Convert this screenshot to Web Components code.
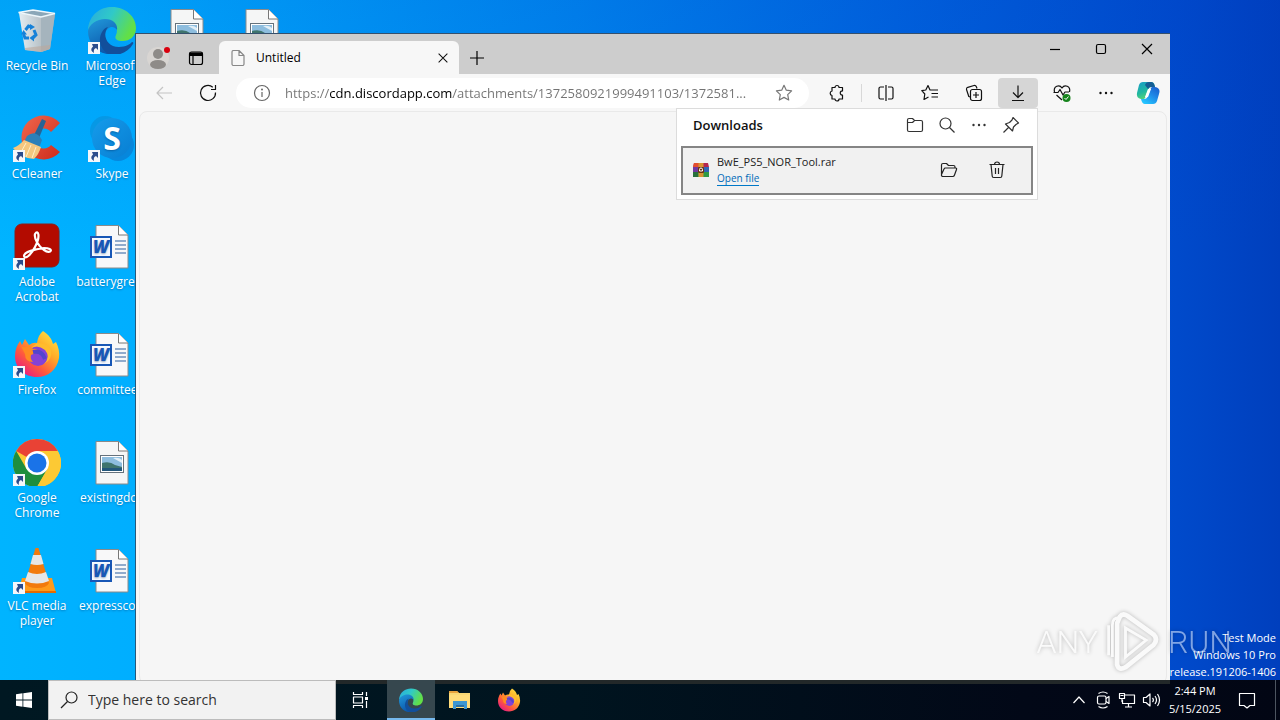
<!DOCTYPE html>
<html lang="en">
<head>
<meta charset="utf-8">
<title>Desktop</title>
<style>
    html, body {
        margin: 0;
        height: 100%;
        overflow: hidden;
    }

    body {
        font-family: "Open Sans", "Noto Sans", sans-serif;
        font-size: 12px;
        color: #111;
    }

    desk-column {
        width: 74px;
    }
</style>
</head>
<body>
<desktop-shell>
    <desk-column>
        <desk-icon icon="recycle">Recycle Bin</desk-icon>
        <desk-icon icon="ccleaner" shortcut>CCleaner</desk-icon>
        <desk-icon icon="acrobat" shortcut>Adobe<br>Acrobat</desk-icon>
        <desk-icon icon="firefox" shortcut>Firefox</desk-icon>
        <desk-icon icon="chrome" shortcut>Google<br>Chrome</desk-icon>
        <desk-icon icon="vlc" shortcut>VLC media<br>player</desk-icon>
    </desk-column>
    <desk-column>
        <desk-icon icon="edge" shortcut>Microsoft<br>Edge</desk-icon>
        <desk-icon icon="skype" shortcut>Skype</desk-icon>
        <desk-icon icon="word">batterygree..</desk-icon>
        <desk-icon icon="word">committee...</desk-icon>
        <desk-icon icon="image">existingdo..</desk-icon>
        <desk-icon icon="word">expressco...</desk-icon>
    </desk-column>
    <desk-column><desk-icon icon="image"></desk-icon></desk-column>
    <desk-column><desk-icon icon="image"></desk-icon></desk-column>

    <build-label slot="overlay">
        <span>Test Mode</span>
        <span>Windows 10 Pro</span>
        <span>release.191206-1406</span>
    </build-label>

    <browser-window slot="overlay">
        <tab-strip slot="tabs"><browser-tab>Untitled</browser-tab></tab-strip>
        <browser-toolbar slot="toolbar"></browser-toolbar>
        <downloads-panel slot="popup">
            <download-item name="BwE_PS5_NOR_Tool.rar">Open file</download-item>
        </downloads-panel>
    </browser-window>

    <task-bar slot="taskbar" time="2:44 PM" date="5/15/2025"></task-bar>
    <brand-mark slot="overlay"></brand-mark>
</desktop-shell>

<script>
const pageIcon = fill => `<path d="M8 3.500H30.500L40 13V46H8Z" fill="${fill}" stroke="#8a8a8a"/><path d="M30.500 3.500V13H40" fill="#fff" stroke="#777"/>`;

// [viewBox, markup]
const ICONS = {
    back: ['0 0 20 20', '<path d="M18 10H3M9 4L3 10L9 16" class="s"/>'],
    refresh: ['0 0 20 20', '<path d="M17.500 9.500A7.500 7.500 0 1 1 14.800 4.200M17.500 2V6.500H13" class="s"/>'],
    info: ['0 0 20 20', '<circle cx="10" cy="10" r="7.500" class="s"/><path d="M10 9V14" class="s"/><circle cx="10" cy="6.500" r="1" fill="currentColor"/>'],
    star: ['0 0 20 20', '<path d="M10 2.300L12.300 7.200L17.600 7.900L13.700 11.600L14.700 17L10 14.400L5.300 17L6.300 11.600L2.400 7.900L7.700 7.200Z" class="s"/>'],
    puzzle: ['0 0 20 20', '<path d="M5 4.500H8A2 2 0 0 1 12 4.500H15.500V8C12.500 7.500 12.500 12.500 15.500 12V16H12A2 2 0 0 1 8 16H5V12.500A2.300 2.300 0 0 1 5 8Z" class="s"/>'],
    split: ['0 0 20 20', '<path d="M8 4H4.500A1.500 1.500 0 0 0 3 5.500V14.500A1.500 1.500 0 0 0 4.500 16H8M12 4H15.500A1.500 1.500 0 0 1 17 5.500V14.500A1.500 1.500 0 0 1 15.500 16H12M10 2V18" class="s"/>'],
    favorites: ['0 0 20 20', '<path d="M11.500 7L10 7L8 2.500L5.800 7L1.800 7.700L4.800 11L4 16.500L8.500 14M11.500 7H18M11.500 10.500H18M11.500 14H18" class="s"/>'],
    collections: ['0 0 20 20', '<path d="M6 14L4.800 13.500L2.500 6.500A2 2 0 0 1 3.800 4.300L10 2.500A2 2 0 0 1 12.500 4L13 5.500" class="s"/><rect x="6.500" y="6.500" width="11" height="11" rx="2" class="s"/><path d="M12 9V15M9 12H15" class="s"/>'],
    download: ['0 0 20 20', '<path d="M10 2.500V14M5 9.500L10 14.500L15 9.500M4 17.500H16" class="s"/>'],
    heart: ['0 0 20 20', '<path d="M2.500 9C1 3 7.500 1 10 5C12.500 1 19 3 17.500 9M1.500 9.500H6L8 6.500L11 12L13 9H17M4.500 12L10 17" class="s"/><circle cx="14.500" cy="15" r="4" fill="#16841c"/><path d="M12.500 15L14 16.500L16.500 13.500" fill="none" stroke="#fff"/>'],
    more: ['0 0 20 20', '<g fill="currentColor"><circle cx="4.500" cy="10" r="1.200"/><circle cx="10" cy="10" r="1.200"/><circle cx="15.500" cy="10" r="1.200"/></g>'],
    copilot: ['0 0 24 24', `<defs><linearGradient id="a" x1="0" y1="0" x2=".4" y2="1"><stop stop-color="#199cc8"/><stop offset=".6" stop-color="#20b8a0"/><stop offset="1" stop-color="#58d475"/></linearGradient><linearGradient id="b" x1="1" y1="0" x2=".3" y2="1"><stop stop-color="#1858c9"/><stop offset=".5" stop-color="#2088e6"/><stop offset="1" stop-color="#24c4ff"/></linearGradient></defs>
        <path d="M7 1H15Q18 1 18.500 4L19 6H15Q13 6 12 9L9 17Q8 19 5 18Q0 17 1 12L3 4Q4 1 7 1Z" fill="url(#a)"/><path d="M13 1H15Q18 1 19 6H15Q13 6 12 8L9 4Q10 1 13 1Z" fill="#155d93"/><path d="M17 23H9Q6 23 5 18H9Q11 18 12 15L15 7Q16 5 19 6Q25 7 23 13L21 20Q20 23 17 23Z" fill="url(#b)"/><path d="M12 8H15L12 16H9Z" fill="#fff"/>`],
    profile: ['0 0 24 24', '<circle cx="12" cy="12" r="11" fill="#d8d5d2"/><circle cx="12" cy="8" r="5" fill="#8e8b88"/><ellipse cx="12" cy="18.500" rx="8" ry="4.500" fill="#8e8b88"/><circle cx="21" cy="4" r="3" fill="#d9000d"/>'],
    workspace: ['0 0 16 16', '<rect x="1.500" y="2" width="13" height="12.500" rx="2" fill="none" stroke="currentColor" stroke-width="1.200"/><path d="M1.500 2.500H14.500V6H1.500Z" fill="currentColor"/><path d="M5 6V14" class="s"/>'],
    file: ['0 0 16 16', '<path d="M3.500 .5H9L14 5.500V14A1.500 1.500 0 0 1 12.500 15.500H3.500A1.500 1.500 0 0 1 2 14V2A1.500 1.500 0 0 1 3.500 .5ZM9 .5V5.500H14" class="s"/>'],
    close: ['0 0 16 16', '<path d="M3 3L13 13M13 3L3 13" class="s"/>'],
    plus: ['0 0 16 16', '<path d="M8 1V15M1 8H15" class="s"/>'],
    minimize: ['0 0 16 16', '<path d="M3 8.500H13" class="s"/>'],
    maximize: ['0 0 16 16', '<rect x="3.500" y="3.500" width="9" height="9" rx="1.500" class="s"/>'],
    folder: ['0 0 20 20', '<path d="M2.500 5A1.500 1.500 0 0 1 4 3.500H7.500L9.500 5.500H16A1.500 1.500 0 0 1 17.500 7V15A1.500 1.500 0 0 1 16 16.500H4A1.500 1.500 0 0 1 2.500 15ZM2.500 7.500H7.500L9.500 5.500" class="s"/>'],
    search: ['0 0 20 20', '<circle cx="8.500" cy="8.500" r="5.500" class="s"/><path d="M12.500 12.500L17.500 17.500" class="s"/>'],
    pin: ['0 0 20 20', '<path d="M12 2.500L17.500 8L15 9.500L12.500 12L11.500 16L4.500 9L8.500 7.500L11 5ZM7.500 12.500L2.500 17.500" class="s"/>'],
    openfolder: ['0 0 20 20', '<path d="M2.500 14V5A1.500 1.500 0 0 1 4 3.500H7.500L9.500 5.500H14.500A1.500 1.500 0 0 1 16 7V8M2.500 14.500L5 9A1.500 1.500 0 0 1 6.500 8H16.500A1 1 0 0 1 17.500 9.500L15.500 15A2 2 0 0 1 14 16.500H4A1.500 1.500 0 0 1 2.500 14.500Z" class="s"/>'],
    trash: ['0 0 20 20', '<path d="M2.500 4.500H17.500M7.500 4.500A2.500 2.500 0 0 1 12.500 4.500M4 4.500L5.200 16A1.500 1.500 0 0 0 6.700 17.500H13.300A1.500 1.500 0 0 0 14.800 16L16 4.500M8.500 8V14M11.500 8V14" class="s"/>'],
    rar: ['0 0 16 16', '<path d="M1 1H15L16 5H0Z" fill="#b3264f"/><path d="M1 1H6V5H0Z" fill="#e34f2f"/><rect y="5" width="16" height="5" fill="#2f65b4"/><rect y="5" width="5" height="5" fill="#7137a0"/><rect y="10" width="16" height="5" fill="#2f9b45"/><rect y="10" width="5" height="5" fill="#28703c"/><rect x="5.500" y="1" width="5" height="14" fill="#d99432"/><rect x="5" y="5" width="6" height="6" rx="1" fill="#6b3413"/><path d="M6.500 9V7.500A1.500 1.500 0 0 1 9.500 7.500V9Z" fill="none" stroke="#fff"/>'],
    start: ['0 0 16 16', '<path d="M0 2.200L6.500 1.300V7.600H0ZM7.300 1.200L16 0V7.600H7.300ZM0 8.400H6.500V14.700L0 13.800ZM7.300 8.400H16V16L7.300 14.800Z" fill="#fff"/>'],
    find: ['0 0 20 20', '<circle cx="12.500" cy="7.500" r="5.500" class="s"/><path d="M8.500 11.500L2 18" class="s"/>'],
    taskview: ['0 0 20 20', '<path d="M3.500 2V4.500H12.500V2M3.500 18V15.500H12.500V18M3.500 7H12.500V13H3.500ZM16.500 2V6M16.500 11V18" class="s"/><rect x="15" y="7" width="3" height="3" fill="currentColor"/>'],
    explorer: ['0 0 24 24', '<path d="M1 3H9L11 5H22V20H1Z" fill="#f8d775"/><path d="M1 3H9L11 5H1Z" fill="#e8a33d"/><path d="M1 7H22V20H1Z" fill="#ffdc7a"/><path d="M5 13H19V21H16V17H8V21H5Z" fill="#3b96d2"/><path d="M8 17H16V19H8Z" fill="#2a6fa3"/>'],
    chevron: ['0 0 16 16', '<path d="M2.500 11L8 5L13.500 11" class="s"/>'],
    camera: ['0 0 20 20', '<path d="M5.500 3.500Q10 .5 14.500 3.500M5.500 16.500Q10 19.500 14.500 16.500M13 8.500L16 6.500V13.500L13 11.500" class="s"/><rect x="4.500" y="6" width="8.500" height="8" rx="1.500" class="s"/>'],
    network: ['0 0 20 20', '<path d="M8 5H17.500V13.500H5.500V10M11.500 13.500V17M8 17H15M2.500 3.500H7.500V8.500H2.500ZM3.500 5.500H6.500M5 8.500V12" class="s"/>'],
    sound: ['0 0 20 20', '<path d="M2.500 7.500H5L9 4V16L5 12.500H2.500ZM11.500 8A3 3 0 0 1 11.500 12M14 6Q17 10 14 14M16.500 4Q20.500 10 16.500 16" class="s"/>'],
    notice: ['0 0 20 20', '<path d="M2.500 3.500H17.500V15.500H13L10 18L7 15.500H2.500Z" class="s"/>'],

    recycle: ['0 0 48 48', `<defs><linearGradient id="a"><stop stop-color="#e4edf2"/><stop offset=".6" stop-color="#b9c3c9"/><stop offset="1" stop-color="#8fa5b3"/></linearGradient></defs>
        <path d="M6 7L12 44L28 46L37 43L42 8L30 11Z" fill="url(#a)"/><path d="M28 11L42 8L37 43L28 46Z" fill="#a5b4bd"/><path d="M5.500 6.500L20 4L42 7.500L28 11Z" fill="#8ba7b8" stroke="#eef6fa" stroke-width="1.300"/><path d="M12 42L37 39V43L28 46L12 44Z" fill="#bba99c" opacity=".6"/>
        <g fill="none" stroke="#1681d8" stroke-width="3"><path d="M12.500 24L15.500 20L18 21M21 24L23 29L20 32M16 32H12L10.500 28"/></g><path d="M17 18L22 21L17 24ZM21 28.500V35.500L16.500 32ZM8 28.500L10.500 24L14 28.500Z" fill="#1681d8"/>`],
    edge: ['0 0 48 48', `<defs><linearGradient id="a" x1="0" x2="1" y2=".4"><stop stop-color="#29a9df"/><stop offset=".5" stop-color="#30c9c8"/><stop offset="1" stop-color="#62df47"/></linearGradient><linearGradient id="b" y2="1" x2=".4"><stop stop-color="#229adb"/><stop offset="1" stop-color="#0b58ac"/></linearGradient></defs>
        <path d="M0 24C1 8 13 1 24 1C38 1 48 11 48 22C48 31 41 35 35 35C29 35 26 33 28 29C31 23 27 15 17 15C9 15 3 19 0 24Z" fill="url(#a)"/><path d="M0 25C1 18 9 13 17 13C26 13 30 19 29 24C26 19 19 20 17 28C15 37 20 46 29 48C10 51 0 38 0 25Z" fill="url(#b)"/><path d="M20 21C14 28 18 41 31 41C38 41 42 38 44 36Q46 36 45 38C41 45 33 49 26 49C17 49 11 40 12 32C13 26 16 22 20 21Z" fill="#124f9b"/>`],
    ccleaner: ['0 0 48 48', `<defs><linearGradient id="a" y2="1"><stop stop-color="#ef674d"/><stop offset="1" stop-color="#ce2b1c"/></linearGradient></defs>
        <path d="M47 9A22 22 0 1 0 47 38L38 31A10 10 0 1 1 38 18Z" fill="url(#a)"/><path d="M29 5L33 7L26 24L20 23Z" fill="#266496"/><path d="M14 22Q23 15 29 26L26 34L10 30Z" fill="#2b80b9"/><path d="M11 26L28 33Q26 40 21 45Q7 44 0 34Q7 31 11 26Z" fill="#f4c77f"/><path d="M13 29L7 40M18 31L13 43M23 33L19 44" stroke="#fff0c9" fill="none"/>`],
    skype: ['0 0 48 48', `<defs><linearGradient id="a" y2="1"><stop stop-color="#159ceb"/><stop offset="1" stop-color="#087ed2"/></linearGradient></defs><circle cx="17" cy="17" r="15" fill="#0698e5"/><circle cx="30" cy="31" r="16" fill="#0787dc"/><circle cx="24" cy="24" r="20" fill="url(#a)"/><text x="24" y="36" text-anchor="middle" font-family="Open Sans" font-weight="700" font-size="32" fill="#fff">S</text>`],
    acrobat: ['0 0 48 48', '<rect x="2" y="2" width="44" height="43" rx="7" fill="#b30b00" stroke="#8c1d18"/><path d="M22 12C25 7 28 14 22 25C18 33 12 38 11 34C11 30 22 27 31 26C42 26 38 33 31 28C25 24 21 16 22 12Z" fill="none" stroke="#fff" stroke-width="2.200"/>'],
    firefox: ['0 0 48 48', `<defs><linearGradient id="a" x1="1" x2=".2" y2="1"><stop stop-color="#fff04a"/><stop offset=".4" stop-color="#ffac28"/><stop offset=".7" stop-color="#ff5a3c"/><stop offset="1" stop-color="#e5168a"/></linearGradient></defs>
        <path d="M30 1C36 5 39 9 40 14L43 12Q47 20 46 28C44 40 35 47 24 47C11 47 2 38 2 26C2 20 4 15 7 11L9 15L12 9L16 15Q20 12 24 13Q25 5 30 1Z" fill="url(#a)"/><circle cx="25" cy="26" r="10" fill="#8542d6"/><path d="M18 18Q25 14 32 20Q38 27 31 34Q40 29 38 20Q35 13 24 13Z" fill="#ffbc2c"/><path d="M8 16Q12 19 16 15L20 19Q25 18 25 22L18 25Q17 29 20 32Q12 32 12 24Z" fill="#ff8a21"/><path d="M20 22Q29 20 32 29" fill="none" stroke="#5345cd" stroke-width="4"/>`],
    chrome: ['0 0 48 48', '<circle cx="24" cy="25" r="24" fill="#fcc934"/><path d="M24 25L3.200 13A24 24 0 0 1 44.800 13Z" fill="#e94235"/><path d="M24 13H44.800L24 25Z" fill="#e94235"/><path d="M13.600 31L3.200 13A24 24 0 0 0 24 49L34.400 31Z" fill="#1e8e3e"/><path d="M34.400 31L24 49A24 24 0 0 0 44.800 13H24Z" fill="#fcc934"/><circle cx="24" cy="25" r="12" fill="#fff"/><circle cx="24" cy="25" r="9.500" fill="#1a73e8"/>'],
    vlc: ['0 0 48 48', '<path d="M9 32H39L43 47H5Z" fill="#ff9a1a"/><path d="M5 45H43V47H5Z" fill="#e66b00"/><path d="M22.500 2H25.500L36 37Q34 42 24 42Q14 42 12 37Z" fill="#f27a0c"/><path d="M20 9H28L30.500 18Q24 20 17.500 18ZM15 26Q24 30 33 26L36 35Q24 40 12 35Z" fill="#e6e6e6"/>'],
    word: ['0 0 48 48', pageIcon('#f8f8f9') + '<path d="M27 19H38M27 23H38M27 27H38M27 31H38" stroke="#2a5f9f"/><rect x="3" y="15" width="20" height="20" fill="#f5f9ff" stroke="#1857b6" stroke-width="2"/><text x="13" y="31" text-anchor="middle" font-family="Open Sans" font-style="italic" font-weight="800" font-size="17" fill="#1857b6">W</text>'],
    image: ['0 0 48 48', pageIcon('#f5f6f6') + '<rect x="12.500" y="17.500" width="23" height="17" fill="#fff" stroke="#65727c"/><rect x="14" y="19" width="20" height="14" fill="#8dbdde"/><path d="M14 25Q22 23 27 27L34 29V33H14Z" fill="#3f746d"/><path d="M14 30H34V33H14Z" fill="#23577b"/><path d="M25 20Q31 19 34 22V25Z" fill="#e2eff7"/>'],
    play: ['0 0 56 64', '<path d="M6 48V14Q6 6 13 6M2 46V14" fill="none" stroke="#fff" stroke-width="3"/><path d="M14 5Q17 1 22 4L50 24Q55 29 50 35L20 59Q13 63 11 56V12Z" fill="none" stroke="#fff" stroke-width="5"/><path d="M20 17L42 30L20 48Z" fill="none" stroke="#fff" stroke-width="3"/>']
};

function render(host, html) {
    host.attachShadow({ mode: 'open' });
    host.shadowRoot.innerHTML = html;
}

class UiIcon extends HTMLElement {
    connectedCallback() {
        const [box, markup] = ICONS[this.getAttribute('name')];
        const size = this.getAttribute('size') || 20;
        render(this, `
            <style>
                :host { display: block; flex: none; }
                svg { display: block; }
                .s { fill: none; stroke: currentColor; stroke-width: 1.2; stroke-linejoin: round; }
            </style>
            <svg width="${size}" height="${size}" viewBox="${box}" aria-hidden="true">${markup}</svg>
        `);
    }
}

class DesktopShell extends HTMLElement {
    connectedCallback() {
        render(this, `
            <style>
                :host {
                    display: flex;
                    flex-direction: column;
                    height: 100vh;
                    position: relative;
                    background:
                        linear-gradient(180deg, rgba(0, 60, 200, .14), rgba(0, 90, 210, 0) 35%),
                        linear-gradient(90deg, #00b4ff 0, #00aeff 11%, #0086ee 45%, #0064de 70%, #004acb 92%, #003fbd 100%);
                }
                main {
                    flex: 1;
                    min-height: 0;
                    display: flex;
                    gap: 1px;
                }
            </style>
            <main><slot></slot></main>
            <slot name="overlay"></slot>
            <slot name="taskbar"></slot>
        `);
    }
}

class DeskColumn extends HTMLElement {
    connectedCallback() {
        render(this, `
            <style>
                :host { display: grid; grid-auto-rows: 108px; align-content: start; }
            </style>
            <slot></slot>
        `);
    }
}

class DeskIcon extends HTMLElement {
    connectedCallback() {
        const arrow = this.hasAttribute('shortcut')
            ? '<svg class="arrow" width="12" height="12" viewBox="0 0 12 12"><path d="M0 0H12V12H0Z" fill="#f4f6fa"/><path d="M4 2H10V8L8 6Q5 7 6 11Q1 8 5 4.500Z" fill="#2b4c8c"/></svg>'
            : '';
        render(this, `
            <style>
                :host {
                    display: flex;
                    flex-direction: column;
                    align-items: center;
                    gap: 4px;
                    padding-top: 6px;
                    font-size: 12px;
                    line-height: 15px;
                    color: #fff;
                    text-align: center;
                    white-space: nowrap;
                    text-shadow: 0 1px 2px rgba(0, 40, 90, .4);
                }
                .picture { position: relative; }
                .arrow { position: absolute; left: 0; bottom: 0; }
            </style>
            <div class="picture"><ui-icon name="${this.getAttribute('icon')}" size="48"></ui-icon>${arrow}</div>
            <div><slot></slot></div>
        `);
    }
}

class BuildLabel extends HTMLElement {
    connectedCallback() {
        render(this, `
            <style>
                :host {
                    position: absolute;
                    right: 4px;
                    bottom: 40px;
                    display: flex;
                    flex-direction: column;
                    align-items: flex-end;
                    font-size: 11px;
                    line-height: 17px;
                    color: #fff;
                }
            </style>
            <slot></slot>
        `);
    }
}

class BrowserWindow extends HTMLElement {
    connectedCallback() {
        render(this, `
            <style>
                :host {
                    position: absolute;
                    left: 135px;
                    right: 110px;
                    top: 34px;
                    bottom: 36px;
                    display: flex;
                    flex-direction: column;
                    box-sizing: border-box;
                    border-left: 1px solid #24597c;
                    background: #f7f7f7;
                    box-shadow: 0 -1px 0 #35506c;
                }
                .page {
                    flex: 1;
                    margin: 0 3px;
                    border: 1px solid #e9e9e9;
                    border-radius: 8px;
                    background: #f6f6f6;
                }
            </style>
            <slot name="tabs"></slot>
            <slot name="toolbar"></slot>
            <div class="page"></div>
            <slot name="popup"></slot>
        `);
    }
}

class TabStrip extends HTMLElement {
    connectedCallback() {
        render(this, `
            <style>
                :host {
                    display: flex;
                    height: 40px;
                    background: #cdcdcd;
                    color: #000;
                }
                button {
                    display: grid;
                    place-items: center;
                    border: 0;
                    padding: 0;
                    background: none;
                    color: inherit;
                }
                .tools {
                    display: flex;
                    padding: 8px 4px 0 3px;
                }
                .tools button { width: 38px; height: 32px; }
                .new { width: 36px; height: 32px; margin-top: 8px; }
                .controls { display: flex; margin-left: auto; }
                .controls button { width: 46px; height: 30px; }
            </style>
            <div class="tools">
                <button aria-label="Profile"><ui-icon name="profile" size="24"></ui-icon></button>
                <button aria-label="Tab actions"><ui-icon name="workspace" size="16"></ui-icon></button>
            </div>
            <slot></slot>
            <button class="new" aria-label="New tab"><ui-icon name="plus" size="16"></ui-icon></button>
            <div class="controls">
                <button aria-label="Minimize"><ui-icon name="minimize" size="16"></ui-icon></button>
                <button aria-label="Maximize"><ui-icon name="maximize" size="16"></ui-icon></button>
                <button aria-label="Close"><ui-icon name="close" size="16"></ui-icon></button>
            </div>
        `);
    }
}

class BrowserTab extends HTMLElement {
    connectedCallback() {
        render(this, `
            <style>
                :host {
                    display: flex;
                    align-items: center;
                    gap: 10px;
                    box-sizing: border-box;
                    width: 240px;
                    margin-top: 7px;
                    padding: 0 4px 0 11px;
                    background: #f7f7f7;
                    border-radius: 6px 6px 0 0;
                    font-size: 12px;
                }
                ui-icon { color: #888; }
                span { flex: 1; }
                button {
                    display: grid;
                    place-items: center;
                    width: 24px;
                    height: 24px;
                    padding: 0;
                    border: 0;
                    background: none;
                }
                button ui-icon { color: #111; }
            </style>
            <ui-icon name="file" size="16"></ui-icon>
            <span><slot></slot></span>
            <button aria-label="Close tab"><ui-icon name="close" size="14"></ui-icon></button>
        `);
    }
}

class BrowserToolbar extends HTMLElement {
    connectedCallback() {
        const tool = (name, label, cls = '') =>
            `<button class="${cls}" aria-label="${label}"><ui-icon name="${name}" size="${name === 'copilot' ? 24 : 20}"></ui-icon></button>`;
        render(this, `
            <style>
                :host {
                    display: flex;
                    align-items: center;
                    gap: 4px;
                    height: 37px;
                    padding: 0 4px 0 8px;
                    background: #f7f7f7;
                }
                button {
                    display: grid;
                    place-items: center;
                    flex: none;
                    width: 40px;
                    height: 30px;
                    padding: 0;
                    border: 0;
                    border-radius: 4px;
                    background: none;
                    color: #111;
                }
                .off { color: #c4c4c4; }
                .on { background: #d6d6d6; }
                .last { width: 36px; }
                .address {
                    display: flex;
                    align-items: center;
                    flex: 1;
                    min-width: 0;
                    height: 30px;
                    margin: 0 4px;
                    padding: 0 15px 0 16px;
                    gap: 13px;
                    box-sizing: border-box;
                    border-radius: 15px;
                    background: #fff;
                    color: #666;
                }
                .address button { width: 20px; color: #777; }
                /* the host name is darker than the rest of the URL */
                input {
                    flex: 1;
                    min-width: 0;
                    padding: 0;
                    border: 0;
                    outline: 0;
                    font: 13px/20px "Open Sans", "Noto Sans", sans-serif;
                    color: transparent;
                    background: linear-gradient(90deg, #737373 44px, #000 44px, #000 167px, #737373 167px);
                    -webkit-background-clip: text;
                    background-clip: text;
                }
                .line { width: 1px; height: 18px; background: #d8d8d8; }
            </style>
            ${tool('back', 'Back', 'off')}
            ${tool('refresh', 'Refresh')}
            <div class="address">
                <ui-icon name="info"></ui-icon>
                <input type="text" aria-label="Address" value="https://cdn.discordapp.com/attachments/1372580921999491103/1372581...">
                ${tool('star', 'Add to favorites')}
            </div>
            ${tool('puzzle', 'Extensions')}
            <div class="line"></div>
            ${tool('split', 'Split screen')}
            ${tool('favorites', 'Favorites')}
            ${tool('collections', 'Collections')}
            ${tool('download', 'Downloads', 'on')}
            ${tool('heart', 'Browser essentials')}
            ${tool('more', 'Settings and more')}
            ${tool('copilot', 'Copilot', 'last')}
        `);
    }
}

class DownloadsPanel extends HTMLElement {
    connectedCallback() {
        render(this, `
            <style>
                :host {
                    position: absolute;
                    top: 74px;
                    right: 132px;
                    width: 362px;
                    box-sizing: border-box;
                    padding: 0 4px 4px;
                    border: 1px solid #dcdcdc;
                    background: #fff;
                }
                header {
                    display: flex;
                    align-items: center;
                    height: 32px;
                    padding: 0 6px 5px 12px;
                }
                h2 {
                    flex: 1;
                    margin: 0;
                    font-size: 13px;
                    font-weight: 600;
                }
                button {
                    display: grid;
                    place-items: center;
                    width: 32px;
                    height: 28px;
                    padding: 0;
                    border: 0;
                    background: none;
                    color: #333;
                }
            </style>
            <header>
                <h2>Downloads</h2>
                <button aria-label="Open downloads folder"><ui-icon name="folder"></ui-icon></button>
                <button aria-label="Search downloads"><ui-icon name="search"></ui-icon></button>
                <button aria-label="More options"><ui-icon name="more"></ui-icon></button>
                <button aria-label="Pin downloads"><ui-icon name="pin"></ui-icon></button>
            </header>
            <slot></slot>
        `);
    }
}

class DownloadItem extends HTMLElement {
    connectedCallback() {
        render(this, `
            <style>
                :host {
                    display: flex;
                    align-items: center;
                    box-sizing: border-box;
                    height: 49px;
                    padding: 0 14px 2px 10px;
                    gap: 8px;
                    border: 2px solid #858585;
                    background: #f1f1f1;
                }
                .text {
                    display: flex;
                    flex-direction: column;
                    align-items: flex-start;
                    flex: 1;
                }
                .name { font-size: 11px; line-height: 18px; color: #222; }
                a {
                    border-bottom: 1px solid #0078c8;
                    font-size: 10px;
                    line-height: 14px;
                    color: #0069b8;
                    text-decoration: none;
                }
                button {
                    display: grid;
                    place-items: center;
                    width: 40px;
                    height: 40px;
                    padding: 0;
                    border: 0;
                    background: none;
                    color: #222;
                }
            </style>
            <ui-icon name="rar" size="16"></ui-icon>
            <div class="text">
                <span class="name">${this.getAttribute('name')}</span>
                <a href="#"><slot></slot></a>
            </div>
            <button aria-label="Show in folder"><ui-icon name="openfolder"></ui-icon></button>
            <button aria-label="Delete file"><ui-icon name="trash"></ui-icon></button>
        `);
    }
}

class TaskBar extends HTMLElement {
    connectedCallback() {
        render(this, `
            <style>
                :host {
                    display: flex;
                    position: relative;
                    height: 40px;
                    background: linear-gradient(90deg, #001822, #00141f 45%, #020817 80%, #020614);
                    color: #fff;
                }
                /* strip of the window seen through the bar */
                .glass {
                    position: absolute;
                    left: 336px;
                    right: 110px;
                    top: 0;
                    height: 4px;
                    background: #222829;
                }
                button {
                    display: grid;
                    place-items: center;
                    position: relative;
                    width: 48px;
                    padding: 0;
                    border: 0;
                    background: none;
                    color: inherit;
                }
                label {
                    display: flex;
                    align-items: center;
                    gap: 9px;
                    box-sizing: border-box;
                    width: 288px;
                    padding: 0 10px;
                    border: 1px solid #bcbcbc;
                    background: #f2f2f2;
                    color: #222;
                }
                input {
                    flex: 1;
                    min-width: 0;
                    padding: 0;
                    border: 0;
                    outline: 0;
                    background: none;
                    font: 14px/20px "Open Sans", "Noto Sans", sans-serif;
                }
                input::placeholder { color: #333; opacity: 1; }
                .apps { display: flex; gap: 1px; margin-left: 3px; }
                .active { background: #36474e; box-shadow: inset 0 -2px #76b9ed; }
                .tray { display: flex; margin-left: auto; }
                .tray button { width: 24px; }
                .tray .clock {
                    width: 64px;
                    font: 11px/18px "Open Sans", "Noto Sans", sans-serif;
                    place-content: center;
                }
                .tray .notice { width: 40px; }
                .peek { width: 4px; margin-left: 8px; border-left: 1px solid #4d5560; }
            </style>
            <div class="glass"></div>
            <button aria-label="Start"><ui-icon name="start" size="16"></ui-icon></button>
            <label>
                <ui-icon name="find"></ui-icon>
                <input type="text" aria-label="Search" placeholder="Type here to search">
            </label>
            <button aria-label="Task View"><ui-icon name="taskview"></ui-icon></button>
            <div class="apps">
                <button class="active" aria-label="Microsoft Edge"><ui-icon name="edge" size="24"></ui-icon></button>
                <button aria-label="File Explorer"><ui-icon name="explorer" size="24"></ui-icon></button>
                <button aria-label="Firefox"><ui-icon name="firefox" size="24"></ui-icon></button>
            </div>
            <div class="tray">
                <button aria-label="Show hidden icons"><ui-icon name="chevron" size="16"></ui-icon></button>
                <button aria-label="Meet Now"><ui-icon name="camera"></ui-icon></button>
                <button aria-label="Network"><ui-icon name="network"></ui-icon></button>
                <button aria-label="Volume"><ui-icon name="sound"></ui-icon></button>
                <button class="clock"><span>${this.getAttribute('time')}</span><span>${this.getAttribute('date')}</span></button>
                <button class="notice" aria-label="Notifications"><ui-icon name="notice"></ui-icon></button>
                <div class="peek"></div>
            </div>
        `);
    }
}

class BrandMark extends HTMLElement {
    connectedCallback() {
        render(this, `
            <style>
                :host {
                    position: absolute;
                    right: 48px;
                    bottom: 48px;
                    display: flex;
                    align-items: center;
                    gap: 5px;
                    font: 300 32px/36px Roboto, "Liberation Sans", sans-serif;
                    color: #fff;
                    opacity: .5;
                    pointer-events: none;
                    filter: drop-shadow(0 0 2px rgba(0, 0, 0, .5));
                }
            </style>
            <span>ANY</span>
            <ui-icon name="play" size="60"></ui-icon>
            <span>RUN</span>
        `);
    }
}

customElements.define('ui-icon', UiIcon);
customElements.define('desktop-shell', DesktopShell);
customElements.define('desk-column', DeskColumn);
customElements.define('desk-icon', DeskIcon);
customElements.define('build-label', BuildLabel);
customElements.define('browser-window', BrowserWindow);
customElements.define('tab-strip', TabStrip);
customElements.define('browser-tab', BrowserTab);
customElements.define('browser-toolbar', BrowserToolbar);
customElements.define('downloads-panel', DownloadsPanel);
customElements.define('download-item', DownloadItem);
customElements.define('task-bar', TaskBar);
customElements.define('brand-mark', BrandMark);
</script>
</body>
</html>
